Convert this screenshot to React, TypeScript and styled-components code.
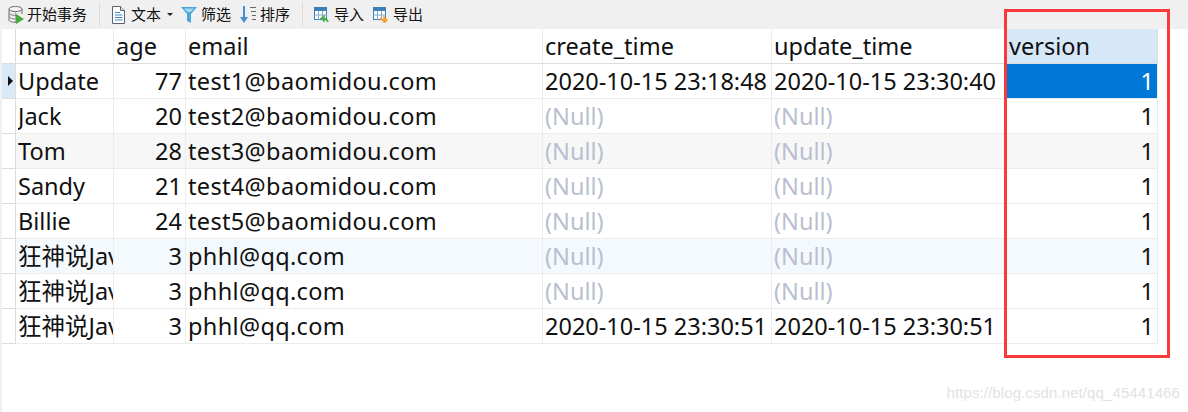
import { Fragment } from "react";
import styled, { createGlobalStyle } from "styled-components";

const GlobalStyle = createGlobalStyle`
  html, body {
    margin: 0;
    padding: 0;
    background: #ffffff;
  }
`;

const UI_FONT = `"Noto Sans", "Noto Sans CJK SC", sans-serif`;

const Page = styled.div`
  position: relative;
  width: 1188px;
  height: 412px;
  overflow: hidden;
  font-family: ${UI_FONT};
  color: #111111;
`;

const Toolbar = styled.div`
  display: flex;
  align-items: center;
  height: 29px;
  padding-left: 8px;
  background: #f0f0f0;
`;

const ToolButton = styled.div<{ $iconGap: number; $after: number }>`
  display: flex;
  align-items: center;
  gap: ${(p) => p.$iconGap}px;
  margin-right: ${(p) => p.$after}px;
  font-size: 15px;
  line-height: 27px;
  white-space: nowrap;
`;

const Divider = styled.div<{ $after: number }>`
  width: 1px;
  height: 25px;
  margin-right: ${(p) => p.$after}px;
  background: #dcdcdc;
`;

const Caret = styled.span`
  width: 0;
  height: 0;
  border-left: 3px solid transparent;
  border-right: 3px solid transparent;
  border-top: 3px solid #222222;
`;

const Body = styled.div`
  height: 383px;
  border-left: 2px solid #f0f0f0;
`;

const Table = styled.div`
  display: grid;
  grid-template-columns: 14px 98px 72px 357px 229px 235px 151px;
  width: 1156px;
`;

const Cell = styled.div<{ $right?: boolean; $bg?: string; $selected?: boolean; $header?: boolean }>`
  display: flex;
  align-items: center;
  justify-content: ${(p) => (p.$right ? "flex-end" : "flex-start")};
  height: 34px;
  padding: 0 3px 0 2px;
  overflow: hidden;
  border-right: 1px solid #ececec;
  border-bottom: 1px solid ${(p) => (p.$header ? "#dddddd" : "#ececec")};
  background: ${(p) => (p.$selected ? "#0078d7" : p.$bg ?? "#ffffff")};
  color: ${(p) => (p.$selected ? "#ffffff" : "#111111")};
  font-size: 23.5px;
  line-height: 34px;
  white-space: nowrap;
`;

const GutterCell = styled(Cell)<{ $current?: boolean }>`
  padding: 0;
  justify-content: center;
  border-right-color: #dddddd;
  border-bottom-color: #dddddd;
  background: ${(p) => (p.$current ? "#d9e9f7" : "#ffffff")};
`;

const NameCell = styled(Cell)`
  padding-right: 0;
`;

const EmailCell = styled(Cell)`
  letter-spacing: 0.34px;
`;

const Pointer = styled.span`
  width: 0;
  height: 0;
  margin-left: 3px;
  border-top: 5px solid transparent;
  border-bottom: 5px solid transparent;
  border-left: 5px solid #111111;
`;

const Clip = styled.span`
  display: block;
  overflow: hidden;
  width: 100%;
`;

const NullText = styled.span`
  color: #b9bfd0;
`;

const VersionHeader = styled(Cell)`
  background: #d6e7f7;
  border-right-color: #dddddd;
`;

const RedBox = styled.div`
  position: absolute;
  left: 1004px;
  top: 9px;
  width: 160px;
  height: 343px;
  border: 3px solid #f93a3a;
`;

const Watermark = styled.div`
  position: absolute;
  right: 8px;
  top: 384px;
  font-family: "Liberation Sans", sans-serif;
  font-size: 15px;
  letter-spacing: 0.1px;
  color: #e2e2e2;
`;

const TxIcon = () => (
  <svg width="16" height="18" viewBox="0 0 16 18">
    <path d="M1 3v11c0 1.300 2.500 2.300 6 2.300h1V3z" fill="#ececec" stroke="#6e6e6e" />
    <path d="M14 3v5H8V3z" fill="#ececec" />
    <path d="M14 3v5" stroke="#6e6e6e" fill="none" />
    <ellipse cx="7.500" cy="3" rx="6.500" ry="2.500" fill="#f6f6f6" stroke="#6e6e6e" />
    <path d="M1 7c0 1.400 2.700 2.400 7 2.400M1 10.500c0 1.400 2.700 2.400 6 2.400" stroke="#7c7c7c" fill="none" />
    <path d="M8 8l8 5-8 5z" fill="#46a83c" />
  </svg>
);

const TextIcon = () => (
  <svg width="13" height="18" viewBox="0 0 13 18">
    <path d="M0.500 0.500h8l4 4v13h-12z" fill="#ffffff" stroke="#5a6470" />
    <path d="M8.500 0.500v4h4" fill="#dfe6ee" stroke="#5a6470" />
    <path d="M3 6.500h5M3 9h7.500M3 11.500h7.500M3 14h7.500" stroke="#3b8ad0" />
  </svg>
);

const FilterIcon = () => (
  <svg width="16" height="16" viewBox="0 0 16 16">
    <path d="M0 0h16l-6 7v9l-4-2V7z" fill="#4ba6dc" />
    <path d="M3 1.500h10L9.500 5h-3z" fill="#a9d8f2" />
  </svg>
);

const SortIcon = () => (
  <svg width="16" height="18" viewBox="0 0 16 18">
    <path d="M4 0v13" stroke="#4a90d0" strokeWidth="2" />
    <path d="M0 11h8l-4 6z" fill="#4a90d0" />
    <path d="M10 1.500h6M11 5.500h5M12 9.500h4M12 13.500h4" stroke="#666666" />
  </svg>
);

const SheetIcon = ({ arrow, flip }: { arrow: string; flip?: boolean }) => (
  <svg width="15" height="16" viewBox="0 0 15 16">
    <rect x="0.500" y="0.500" width="12" height="12" fill="#ffffff" stroke="#3f7fb8" />
    <rect x="0" y="0" width="13" height="4" fill="#3f7fb8" />
    <path d="M0.500 8h12M4.500 4v9M8.500 4v9" stroke="#7fa9cf" />
    {flip ? (
      <path d="M7 11c1 2.500 3.500 3 5.500 2M11 10l3 3-3 3z" stroke={arrow} strokeWidth="1.500" fill={arrow} fillOpacity="0.900" />
    ) : (
      <path d="M14 15c-1-3-3-4-5.500-3.500M10 9l-3 2.500 3 2.500z" stroke={arrow} strokeWidth="1.500" fill={arrow} fillOpacity="0.900" />
    )}
  </svg>
);

type Row = {
  name: string;
  age: number;
  email: string;
  created: string | null;
  updated: string | null;
  bg?: string;
};

const rows: Row[] = [
  { name: "Update", age: 77, email: "test1@baomidou.com", created: "2020-10-15 23:18:48", updated: "2020-10-15 23:30:40" },
  { name: "Jack", age: 20, email: "test2@baomidou.com", created: null, updated: null },
  { name: "Tom", age: 28, email: "test3@baomidou.com", created: null, updated: null, bg: "#f7f7f7" },
  { name: "Sandy", age: 21, email: "test4@baomidou.com", created: null, updated: null },
  { name: "Billie", age: 24, email: "test5@baomidou.com", created: null, updated: null },
  { name: "狂神说Java", age: 3, email: "phhl@qq.com", created: null, updated: null, bg: "#f4f9fd" },
  { name: "狂神说Java", age: 3, email: "phhl@qq.com", created: null, updated: null },
  { name: "狂神说Java", age: 3, email: "phhl@qq.com", created: "2020-10-15 23:30:51", updated: "2020-10-15 23:30:51" },
];

const headers = ["name", "age", "email", "create_time", "update_time"];

const DateValue = ({ value, bg }: { value: string | null; bg?: string }) => (
  <Cell $bg={bg}>{value ?? <NullText>(Null)</NullText>}</Cell>
);

export default function App() {
  return (
    <Page>
      <GlobalStyle />
      <Toolbar>
        <ToolButton $iconGap={3} $after={12}><TxIcon />开始事务</ToolButton>
        <Divider $after={12} />
        <ToolButton $iconGap={6} $after={8}><TextIcon />文本<Caret /></ToolButton>
        <ToolButton $iconGap={4} $after={9}><FilterIcon />筛选</ToolButton>
        <ToolButton $iconGap={4} $after={12}><SortIcon />排序</ToolButton>
        <Divider $after={11} />
        <ToolButton $iconGap={5} $after={9}><SheetIcon arrow="#4caf50" />导入</ToolButton>
        <ToolButton $iconGap={5} $after={0}><SheetIcon arrow="#f0a030" flip />导出</ToolButton>
      </Toolbar>
      <Body>
        <Table>
          <GutterCell $header />
          {headers.map((h) => (
            <Cell key={h} $header>{h}</Cell>
          ))}
          <VersionHeader $header>version</VersionHeader>
          {rows.map((row, i) => (
            <Fragment key={i}>
              <GutterCell $current={i === 0}>{i === 0 && <Pointer />}</GutterCell>
              <NameCell $bg={row.bg}><Clip>{row.name}</Clip></NameCell>
              <Cell $bg={row.bg} $right>{row.age}</Cell>
              <EmailCell $bg={row.bg}>{row.email}</EmailCell>
              <DateValue value={row.created} bg={row.bg} />
              <DateValue value={row.updated} bg={row.bg} />
              <Cell $bg={row.bg} $right $selected={i === 0}>1</Cell>
            </Fragment>
          ))}
        </Table>
      </Body>
      <RedBox />
      <Watermark>https://blog.csdn.net/qq_45441466</Watermark>
    </Page>
  );
}
